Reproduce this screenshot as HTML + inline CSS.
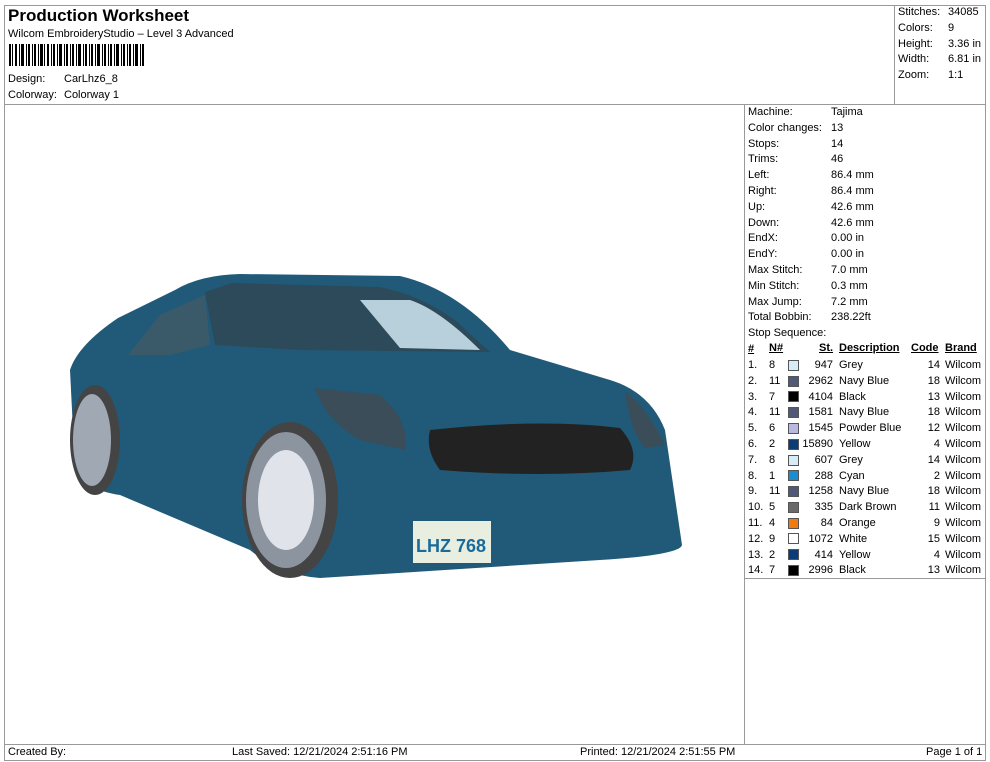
<!DOCTYPE html>
<html><head><style>
body{margin:0;width:990px;height:762px;background:#fff;font-family:"Liberation Sans",Arial,sans-serif;font-size:11px;color:#000;position:relative;overflow:hidden}
.a{position:absolute;white-space:nowrap}
.l{position:absolute;background:#999}
.sw{position:absolute;width:9px;height:9px;border:1px solid #555}
.r{text-align:right}
u{text-decoration:underline}
</style></head><body>
<!-- frame lines -->
<div class="l" style="left:4px;top:5px;width:982px;height:1px"></div>
<div class="l" style="left:4px;top:5px;width:1px;height:756px"></div>
<div class="l" style="left:985px;top:5px;width:1px;height:756px"></div>
<div class="l" style="left:4px;top:104px;width:982px;height:1px"></div>
<div class="l" style="left:894px;top:5px;width:1px;height:99px"></div>
<div class="l" style="left:744px;top:104px;width:1px;height:640px"></div>
<div class="l" style="left:744px;top:578px;width:242px;height:1px"></div>
<div class="l" style="left:4px;top:744px;width:982px;height:1px"></div>
<div class="l" style="left:4px;top:760px;width:982px;height:1px"></div>

<div class="a" style="left:8px;top:6px;font-size:17px;font-weight:bold">Production Worksheet</div>
<div class="a" style="left:8px;top:28px">Wilcom EmbroideryStudio – Level 3 Advanced</div>
<svg class="a" style="left:9px;top:44px" width="137" height="22"><g fill="#000">
<rect x="0" width="2" height="22"/><rect x="3" width="1" height="22"/><rect x="6" width="2" height="22"/><rect x="10" width="1" height="22"/><rect x="12" width="3" height="22"/><rect x="17" width="1" height="22"/><rect x="19" width="2" height="22"/><rect x="23" width="1" height="22"/><rect x="25" width="2" height="22"/><rect x="29" width="1" height="22"/><rect x="31" width="3" height="22"/><rect x="35" width="1" height="22"/><rect x="38" width="2" height="22"/><rect x="42" width="1" height="22"/><rect x="44" width="2" height="22"/><rect x="48" width="1" height="22"/><rect x="50" width="3" height="22"/><rect x="55" width="1" height="22"/><rect x="57" width="2" height="22"/><rect x="61" width="1" height="22"/><rect x="63" width="2" height="22"/><rect x="67" width="1" height="22"/><rect x="69" width="3" height="22"/><rect x="74" width="1" height="22"/><rect x="76" width="2" height="22"/><rect x="80" width="1" height="22"/><rect x="82" width="2" height="22"/><rect x="86" width="1" height="22"/><rect x="88" width="3" height="22"/><rect x="93" width="1" height="22"/><rect x="95" width="2" height="22"/><rect x="99" width="1" height="22"/><rect x="101" width="2" height="22"/><rect x="105" width="1" height="22"/><rect x="107" width="3" height="22"/><rect x="112" width="1" height="22"/><rect x="114" width="2" height="22"/><rect x="118" width="1" height="22"/><rect x="120" width="2" height="22"/><rect x="124" width="1" height="22"/><rect x="126" width="3" height="22"/><rect x="131" width="1" height="22"/><rect x="133" width="2" height="22"/></g></svg>
<div class="a" style="left:8px;top:73px">Design:</div><div class="a" style="left:64px;top:73px">CarLhz6_8</div>
<div class="a" style="left:8px;top:89px">Colorway:</div><div class="a" style="left:64px;top:89px">Colorway 1</div>

<div class="a" style="left:898px;top:5px;line-height:15.8px">Stitches:<br>Colors:<br>Height:<br>Width:<br>Zoom:</div>
<div class="a" style="left:948px;top:5px;line-height:15.8px">34085<br>9<br>3.36 in<br>6.81 in<br>1:1</div>

<div class="a" style="left:748px;top:105px;line-height:15.8px">Machine:<br>Color changes:<br>Stops:<br>Trims:<br>Left:<br>Right:<br>Up:<br>Down:<br>EndX:<br>EndY:<br>Max Stitch:<br>Min Stitch:<br>Max Jump:<br>Total Bobbin:<br>Stop Sequence:</div>
<div class="a" style="left:831px;top:105px;line-height:15.8px">Tajima<br>13<br>14<br>46<br>86.4 mm<br>86.4 mm<br>42.6 mm<br>42.6 mm<br>0.00 in<br>0.00 in<br>7.0 mm<br>0.3 mm<br>7.2 mm<br>238.22ft</div>

<div class="a" style="left:748px;top:342px;font-weight:bold;line-height:15.8px"><u>#</u></div>
<div class="a" style="left:769px;top:342px;font-weight:bold"><u>N#</u></div>
<div class="a" style="left:819px;top:342px;font-weight:bold"><u>St.</u></div>
<div class="a" style="left:839px;top:342px;font-weight:bold"><u>Description</u></div>
<div class="a" style="left:911px;top:342px;font-weight:bold"><u>Code</u></div>
<div class="a" style="left:945px;top:342px;font-weight:bold"><u>Brand</u></div>

<div class="a" style="left:748px;top:358px;line-height:15.8px">1.<br>2.<br>3.<br>4.<br>5.<br>6.<br>7.<br>8.<br>9.<br>10.<br>11.<br>12.<br>13.<br>14.</div>
<div class="a" style="left:769px;top:358px;line-height:15.8px">8<br>11<br>7<br>11<br>6<br>2<br>8<br>1<br>11<br>5<br>4<br>9<br>2<br>7</div>
<div class="a r" style="left:800px;width:33px;top:358px;line-height:15.8px">947<br>2962<br>4104<br>1581<br>1545<br>15890<br>607<br>288<br>1258<br>335<br>84<br>1072<br>414<br>2996</div>
<div class="a" style="left:839px;top:358px;line-height:15.8px">Grey<br>Navy Blue<br>Black<br>Navy Blue<br>Powder Blue<br>Yellow<br>Grey<br>Cyan<br>Navy Blue<br>Dark Brown<br>Orange<br>White<br>Yellow<br>Black</div>
<div class="a r" style="left:915px;width:25px;top:358px;line-height:15.8px">14<br>18<br>13<br>18<br>12<br>4<br>14<br>2<br>18<br>11<br>9<br>15<br>4<br>13</div>
<div class="a" style="left:945px;top:358px;line-height:15.8px">Wilcom<br>Wilcom<br>Wilcom<br>Wilcom<br>Wilcom<br>Wilcom<br>Wilcom<br>Wilcom<br>Wilcom<br>Wilcom<br>Wilcom<br>Wilcom<br>Wilcom<br>Wilcom</div>
<div class="sw" style="left:788px;top:360px;background:#d6ecf6"></div>
<div class="sw" style="left:788px;top:376px;background:#4e5a78"></div>
<div class="sw" style="left:788px;top:391px;background:#000"></div>
<div class="sw" style="left:788px;top:407px;background:#4e5a78"></div>
<div class="sw" style="left:788px;top:423px;background:#b8b8e0"></div>
<div class="sw" style="left:788px;top:439px;background:#0c3c78"></div>
<div class="sw" style="left:788px;top:455px;background:#d6ecf6"></div>
<div class="sw" style="left:788px;top:470px;background:#1a8cd0"></div>
<div class="sw" style="left:788px;top:486px;background:#4e5a78"></div>
<div class="sw" style="left:788px;top:502px;background:#6a6a6a"></div>
<div class="sw" style="left:788px;top:518px;background:#f07c10"></div>
<div class="sw" style="left:788px;top:533px;background:#fff"></div>
<div class="sw" style="left:788px;top:549px;background:#0c3c78"></div>
<div class="sw" style="left:788px;top:565px;background:#000"></div>

<div class="a" style="left:8px;top:746px">Created By:</div>
<div class="a" style="left:232px;top:746px">Last Saved: 12/21/2024 2:51:16 PM</div>
<div class="a" style="left:580px;top:746px">Printed: 12/21/2024 2:51:55 PM</div>
<div class="a" style="left:926px;top:746px">Page 1 of 1</div>

<!-- car -->
<svg class="a" style="left:0;top:0" width="744" height="744">
<path d="M70 370 Q78 345 118 318 L175 290 Q200 275 240 274 L400 276 Q460 290 510 350 L610 380 Q650 392 665 430 L682 545 Q680 555 600 560 L320 578 Q280 575 250 550 L120 495 Q85 490 75 470 Z" fill="#205a78"/>
<path d="M205 292 L232 283 L380 287 Q420 295 455 320 L490 352 L300 350 L215 345 Z" fill="#2c4a5a"/>
<path d="M360 300 L410 300 Q440 310 480 350 L400 348 Z" fill="#b8d0dc"/>
<path d="M128 355 L160 315 L205 295 L210 345 L170 355 Z" fill="#3a5a6a"/>
<path d="M430 430 Q540 418 620 428 Q640 450 630 470 Q540 478 440 470 Q425 450 430 430 Z" fill="#222"/>
<path d="M315 388 L380 395 Q410 420 405 450 L360 440 Q325 420 315 388 Z" fill="#3a4d58"/>
<path d="M625 392 Q645 405 665 445 L645 448 Q630 430 625 392 Z" fill="#3a4d58"/>
<ellipse cx="290" cy="500" rx="48" ry="78" fill="#444"/>
<ellipse cx="286" cy="500" rx="40" ry="68" fill="#8c94a0"/>
<ellipse cx="286" cy="500" rx="28" ry="50" fill="#e0e4ea"/>
<ellipse cx="95" cy="440" rx="25" ry="55" fill="#444"/>
<ellipse cx="92" cy="440" rx="19" ry="46" fill="#a0a8b4"/>
<rect x="413" y="521" width="78" height="42" fill="#e8eee0"/>
<text x="416" y="552" font-family="Liberation Sans" font-size="18" font-weight="bold" fill="#1a6a9a">LHZ 768</text>
</svg>
</body></html>
